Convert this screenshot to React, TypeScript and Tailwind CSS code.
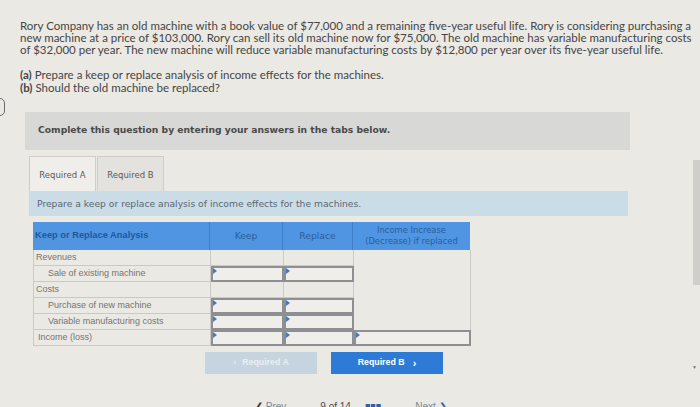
import {ReactNode} from "react";

const rows: {label: string; indent: boolean; input: boolean}[] = [
  {label: "Revenues", indent: false, input: false},
  {label: "Sale of existing machine", indent: true, input: true},
  {label: "Costs", indent: false, input: false},
  {label: "Purchase of new machine", indent: true, input: true},
  {label: "Variable manufacturing costs", indent: true, input: true},
];

function InputCell() {
  return (
    <div className="relative h-full border-2 border-[#8d8f92] bg-[#efeeea]">
      <span className="absolute left-0 top-0 h-0 w-0 border-y-[3px] border-l-[4px] border-y-transparent border-l-[#4a78b8]" />
    </div>
  );
}

function Cell({children, className}: {children?: ReactNode; className?: string}) {
  return <div className={`border-b border-r border-[#c9c9c6] ${className ?? ""}`}>{children}</div>;
}

export default function App() {
  return (
    <div className="relative h-[407px] w-[700px] overflow-hidden bg-[#ebe9e4] font-['Lato',sans-serif] text-[#454545]">
      <span className="absolute -left-[6px] top-[98px] h-[18px] w-[11px] rounded-[5px] border border-[#6b6b6b]" />
      <div className="absolute right-0 top-[160px] h-[125px] w-[7px] bg-[#cfcecb]" />
      <span className="absolute right-[3px] top-[364px] text-[5px] text-[#777]">▼</span>

      <div className="pl-[20px] pt-[20px]">
        <p className="whitespace-nowrap text-[11.5px] leading-[11.8px]">
          Rory Company has an old machine with a book value of $77,000 and a remaining five-year useful life. Rory is considering purchasing a
          <br />
          new machine at a price of $103,000. Rory can sell its old machine now for $75,000. The old machine has variable manufacturing costs
          <br />
          of $32,000 per year. The new machine will reduce variable manufacturing costs by $12,800 per year over its five-year useful life.
        </p>
        <div className="mt-[14px] text-[11.5px] leading-[12.8px]">
          <p>
            <b className="font-bold">(a)</b> Prepare a keep or replace analysis of income effects for the machines.
          </p>
          <p>
            <b className="font-bold">(b)</b> Should the old machine be replaced?
          </p>
        </div>
      </div>

      <div className="ml-[25px] mt-[17px] flex h-[38px] w-[605px] items-center bg-[#d8d8d6] pb-[3px] pl-[13px]">
        <p className="font-['DejaVu_Sans',sans-serif] text-[9.2px] font-bold text-[#4a4a4a]">
          Complete this question by entering your answers in the tabs below.
        </p>
      </div>

      <div className="ml-[29px] mt-[6px] w-[599px] font-['DejaVu_Sans',sans-serif]">
        <div className="flex h-[35px]">
          <div className="flex w-[67px] items-center justify-center border border-b-0 border-[#cfcdca] bg-[#efeeeb] pt-[3px] text-[8.5px] text-[#5a5a5a]">
            Required A
          </div>
          <div className="ml-[1px] flex w-[67px] items-center justify-center border border-b-0 border-[#cfcdca] bg-[#e3e2df] pt-[3px] text-[8.5px] text-[#5a5a5a]">
            Required B
          </div>
        </div>
        <div className="flex h-[25px] items-center bg-[#cadde7] pl-[8px] text-[9.2px] text-[#5a6670]">
          Prepare a keep or replace analysis of income effects for the machines.
        </div>
      </div>

      <div className="ml-[33px] mt-[6px] w-[437px] text-[9px]">
        <div className="grid h-[28px] grid-cols-[177px_73px_70px_117px] bg-[#4f95e1] font-['DejaVu_Sans',sans-serif] text-[#2a5e9c]">
          <div className="flex items-center border-r border-[#3d7fc8] pl-[2px] font-['Liberation_Sans',sans-serif] text-[9.3px] font-bold text-[#23589a]">
            Keep or Replace Analysis
          </div>
          <div className="flex items-center justify-center border-r border-[#3d7fc8] text-[9.2px]">Keep</div>
          <div className="flex items-center justify-center border-r border-[#3d7fc8] text-[9.2px]">Replace</div>
          <div className="flex flex-col items-center justify-center text-[8.4px] leading-[10.5px]">
            <span>Income Increase</span>
            <span>(Decrease) if replaced</span>
          </div>
        </div>
        <div className="grid grid-cols-[177px_73px_70px_117px] grid-rows-[repeat(6,16px)] border-l border-[#c9c9c6] font-['Liberation_Sans',sans-serif] text-[#747474]">
          {rows.map((r, i) => (
            <div key={r.label} className="contents">
              <Cell className={`flex items-center ${r.indent ? "pl-[14px]" : "pl-[2px]"}`}>{r.label}</Cell>
              {r.input ? (
                <>
                  <InputCell />
                  <InputCell />
                </>
              ) : (
                <>
                  <Cell />
                  <Cell />
                </>
              )}
              {i === 0 && <div className="row-span-5 border-r border-[#c9c9c6]" />}
            </div>
          ))}
          <Cell className="flex items-center pl-[4px]">Income (loss)</Cell>
          <InputCell />
          <InputCell />
          <InputCell />
        </div>
      </div>

      <div className="ml-[205px] mt-[6px] flex gap-[14px] font-['Liberation_Sans',sans-serif] text-[8.8px] font-bold">
        <div className="flex h-[22px] w-[112px] items-center justify-center gap-[6px] bg-[#c6d4df] text-[#e9eef2]">
          <span>‹</span>
          <span>Required A</span>
        </div>
        <div className="flex h-[22px] w-[112px] items-center justify-center gap-[8px] bg-[#2d7bd6] text-white">
          <span>Required B</span>
          <span className="text-[11px]">›</span>
        </div>
      </div>

      <div className="ml-[255px] mt-[25px] flex items-center gap-[14px] font-['Liberation_Sans',sans-serif] text-[10px] text-[#5a6670]">
        <span className="text-[#3a3a3a]">❮ <span className="text-[#7a8a99]">Prev</span></span>
        <span className="ml-[20px] text-[#4a4a4a]">9 of 14</span>
        <span className="text-[9px] leading-[6px] text-[#2d5fa8]">■■■</span>
        <span className="ml-[20px] text-[#7a8a99]">Next <span className="text-[#2d5fa8]">❯</span></span>
      </div>
    </div>
  );
}
